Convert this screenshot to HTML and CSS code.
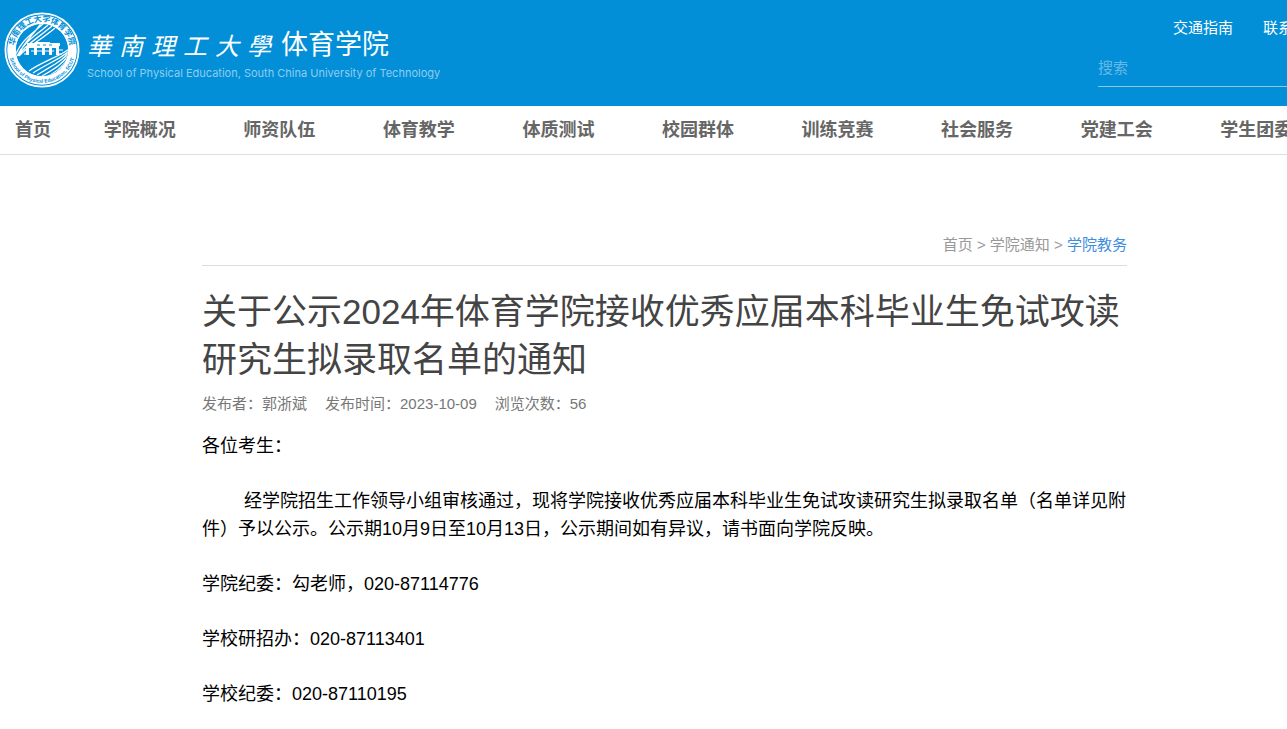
FILE: index.html
```html
<!DOCTYPE html>
<html lang="zh-CN">
<head>
<meta charset="utf-8">
<title>体育学院</title>
<link rel="stylesheet" href="styles.css">
</head>
<body>
<header class="header">
  <a class="brand" href="#">
    <svg class="emblem" viewBox="0 0 76 76" aria-hidden="true">
      <defs>
        <path id="arc-top" d="M11 45A28 28 0 1 1 65 45"/>
        <path id="arc-bottom" d="M5 42A33.300 33.300 0 0 0 71 42"/>
        <clipPath id="disc"><circle cx="38" cy="38" r="26"/></clipPath>
      </defs>
      <circle cx="38" cy="38" r="36.600" fill="none" stroke="#fff" stroke-width="1.800"/>
      <circle cx="38" cy="38" r="30.300" fill="none" stroke="#fff" stroke-width="9"/>
      <circle cx="38" cy="38" r="26" fill="#028fd8"/>
      <g clip-path="url(#disc)" fill="none" stroke="#fff" stroke-width="1.300">
        <path d="M11 44C17 28 28 22 40 11M13 44C19 31 31 24 44 13M14 44C21 33 34 26 48 14M15 44C24 34 37 28 51 16M14 44C20 29 30 23 37 11"/>
        <path d="M66 36C60 43 41 48 25 59M66 38C59 46 44 51 29 61M66 39C59 49 47 54 33 63M66 41C59 52 50 57 38 64M66 43C60 54 53 59 43 65"/>
      </g>
      <path d="M23 31h8v-1h15v1h10v3h-1v9h-3v-7h-4v7h-3v-7h-4v7h-3v-7h-5v7h-3v-7h-5v7h-3v-9h1z" fill="#fff"/>
      <path d="M20 38h4M20 42h4M52 38h7M52 42h6M27 39h23" stroke="#fff" stroke-width="1"/>
      <path d="M33 33h3M39 33h3M45 33h3" stroke="#028fd8" stroke-width="1"/>
      <text class="ring-cn"><textPath href="#arc-top" startOffset="50%">华南理工大学体育学院</textPath></text>
      <text class="ring-en"><textPath href="#arc-bottom" startOffset="50%">School of Physical Education, SCUT</textPath></text>
    </svg>
    <span class="brand-text">
      <span class="brand-names">
        <span class="script"><span>華</span><span>南</span><span>理</span><span>工</span><span>大</span><span>學</span></span>
        <span class="school">体育学院</span>
      </span>
      <span class="brand-en">School of Physical Education, South China University of Technology</span>
    </span>
  </a>
  <div class="tools">
    <div class="quick"><a href="#">交通指南</a><a href="#">联系我们</a></div>
    <input class="search" type="search" placeholder="搜索" aria-label="搜索">
  </div>
</header>
<nav class="nav">
  <a class="home" href="#">首页</a>
  <div class="menu">
    <a href="#">学院概况</a>
    <a href="#">师资队伍</a>
    <a href="#">体育教学</a>
    <a href="#">体质测试</a>
    <a href="#">校园群体</a>
    <a href="#">训练竞赛</a>
    <a href="#">社会服务</a>
    <a href="#">党建工会</a>
    <a href="#">学生团委</a>
  </div>
</nav>
<main class="article">
  <div class="crumbs"><a href="#">首页</a> &gt; <a href="#">学院通知</a> &gt; <a class="current" href="#">学院教务</a></div>
  <h1 class="title">关于公示2024年体育学院接收优秀应届本科毕业生免试攻读研究生拟录取名单的通知</h1>
  <div class="meta"><span>发布者：郭浙斌</span><span>发布时间：2023-10-09</span><span>浏览次数：56</span></div>
  <div class="content">
    <p>各位考生：</p>
    <p class="indent">经学院招生工作领导小组审核通过，现将学院接收优秀应届本科毕业生免试攻读研究生拟录取名单（名单详见附件）予以公示。公示期10月9日至10月13日，公示期间如有异议，请书面向学院反映。</p>
    <p>学院纪委：勾老师，020-87114776</p>
    <p>学校研招办：020-87113401</p>
    <p>学校纪委：020-87110195</p>
  </div>
</main>
</body>
</html>
```
FILE: styles.css
```css
* { box-sizing: border-box; }
body {
  margin: 0;
  overflow-x: hidden;
  background: #fff;
  color: #000;
  font-family: "Liberation Sans", "Noto Sans CJK SC", sans-serif;
}
a { color: inherit; text-decoration: none; }

.header {
  display: flex;
  justify-content: space-between;
  align-items: flex-start;
  overflow: hidden;
  min-height: 106px;
  padding-left: 4px;
  background: #028fd8;
  color: #fff;
}
.brand { display: flex; gap: 7px; padding-top: 12px; }
.emblem { flex: none; width: 76px; height: 76px; }
.ring-cn, .ring-en { fill: #028fd8; text-anchor: middle; }
.ring-cn { font-size: 8px; font-weight: 700; }
.ring-en { font-size: 5px; font-weight: 700; }
.brand-text { display: flex; flex-direction: column; padding-top: 13px; }
.brand-names { display: flex; align-items: center; gap: 10px; height: 40px; }
.script {
  display: flex;
  gap: 8px;
  font-family: "Noto Sans CJK TC", sans-serif;
  font-size: 24px;
  font-style: italic;
  line-height: 40px;
}
.school { font-size: 27px; line-height: 40px; }
.brand-en {
  font-family: Inter, sans-serif;
  font-size: 11px;
  line-height: 16px;
  color: #8fcdef;
  white-space: nowrap;
}

.tools { flex: none; width: 189px; padding-top: 16px; }
.quick {
  display: flex;
  gap: 30px;
  padding-left: 75px;
  font-size: 15px;
  line-height: 24px;
  white-space: nowrap;
}
.search {
  display: block;
  width: 100%;
  height: 38px;
  margin-top: 9px;
  padding: 0;
  border: 0;
  border-bottom: 1px solid #8fc5e5;
  border-radius: 0;
  outline: 0;
  background: transparent;
  color: #fff;
  font: 15px "Liberation Sans", "Noto Sans CJK SC", sans-serif;
}
.search::placeholder { color: #67b9e5; opacity: 1; }

.nav {
  display: flex;
  overflow: hidden;
  border-bottom: 1px solid #ddd;
  color: #666;
  font-size: 18px;
  font-weight: 700;
  line-height: 48px;
  white-space: nowrap;
}
.home { flex: none; width: 70px; padding-left: 15px; }
.menu {
  display: grid;
  flex: 1;
  grid-template-columns: repeat(9, 1fr);
  margin-right: -39px;
  text-align: center;
}

.article { max-width: 967px; margin: 0 auto; padding: 78px 0 24px 42px; }
.crumbs {
  padding-bottom: 8px;
  border-bottom: 1px solid #ddd;
  color: #999;
  font-size: 15px;
  line-height: 24px;
  text-align: right;
}
.current { color: #3d8ee0; }
.title {
  margin: 22px 0 0;
  color: #444;
  font-size: 35px;
  font-weight: 400;
  line-height: 48px;
}
.meta {
  display: flex;
  gap: 18px;
  margin-top: 8px;
  color: #777;
  font-size: 15px;
  line-height: 24px;
}
.content { padding-top: 16px; font-size: 18px; line-height: 28px; }
.content p { margin: 0 0 27px; }
.content .indent { text-indent: 42px; }
```
